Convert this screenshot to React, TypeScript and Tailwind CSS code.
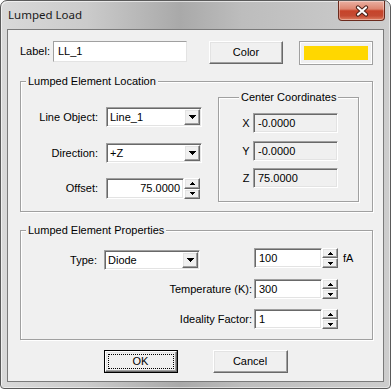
import React from "react";

const raised =
  "bg-[#f0f0f0] border border-t-white border-l-white border-r-[#696969] border-b-[#696969] shadow-[inset_-1px_-1px_0_#a0a0a0,inset_1px_1px_0_#e3e3e3]";
const sunken =
  "border border-t-[#a0a0a0] border-l-[#a0a0a0] border-r-white border-b-white shadow-[inset_1px_1px_0_#696969,inset_-1px_-1px_0_#e3e3e3] p-[1px]";

function DownArrow() {
  return (
    <svg width="7" height="4" viewBox="0 0 7 4" shapeRendering="crispEdges">
      <path d="M0 0h7v1h-1v1h-1v1h-1v1h-1v-1h-1v-1h-1v-1h-1z" fill="#000" />
    </svg>
  );
}

function SmallUp() {
  return (
    <svg width="5" height="3" viewBox="0 0 5 3" shapeRendering="crispEdges">
      <path d="M2 0h1v1h1v1h1v1h-5v-1h1v-1h1z" fill="#000" />
    </svg>
  );
}

function SmallDown() {
  return (
    <svg width="5" height="3" viewBox="0 0 5 3" shapeRendering="crispEdges">
      <path d="M0 0h5v1h-1v1h-1v1h-1v-1h-1v-1h-1z" fill="#000" />
    </svg>
  );
}

function Combo({ value, className = "" }: { value: string; className?: string }) {
  return (
    <div className={`${sunken} bg-white flex h-[20px] w-[96px] ${className}`}>
      <div className="flex-1 pl-[2px] flex items-center leading-none">{value}</div>
      <div className={`${raised} w-[16px] h-full flex items-center justify-center`}>
        <DownArrow />
      </div>
    </div>
  );
}

function SpinEdit({
  value,
  className = "",
  right = false,
}: {
  value: string;
  className?: string;
  right?: boolean;
}) {
  return (
    <div className={`flex h-[20px] ${className}`}>
      <div
        className={`${sunken} bg-white flex-1 flex items-center leading-none ${
          right ? "justify-end pr-[3px]" : "pl-[4px]"
        }`}
      >
        {value}
      </div>
      <div className="w-[16px] flex flex-col">
        <div className={`${raised} flex-1 flex items-center justify-center`}>
          <SmallUp />
        </div>
        <div className={`${raised} flex-1 flex items-center justify-center`}>
          <SmallDown />
        </div>
      </div>
    </div>
  );
}

function Group({
  title,
  className = "",
  titleClass = "left-[5px]",
  children,
}: {
  title: string;
  className?: string;
  titleClass?: string;
  children?: React.ReactNode;
}) {
  return (
    <div
      className={`relative border border-[#a0a0a0] shadow-[inset_1px_1px_0_#ffffff,1px_1px_0_#ffffff] ${className}`}
    >
      <span className={`absolute top-[-8px] ${titleClass} px-[2px] bg-[#f0f0f0] leading-[14px]`}>
        {title}
      </span>
      {children}
    </div>
  );
}

function CoordRow({ label, value, className = "" }: { label: string; value: string; className?: string }) {
  return (
    <div className={`flex items-center ${className}`}>
      <div className="ml-[20px] w-[14px] text-center">{label}</div>
      <div className={`${sunken} bg-[#f0f0f0] w-[85px] h-[20px] flex items-center pl-[4px] leading-none`}>
        {value}
      </div>
    </div>
  );
}

export default function App() {
  return (
    <div className="w-[391px] h-[389px] bg-white font-['Liberation_Sans',Arial,sans-serif] text-[11px] text-black">
      <div className="w-[391px] h-[389px] rounded-t-[7px] rounded-b-[4px] border border-[#5a5a5a] bg-[linear-gradient(90deg,#d9d9d9_0%,#cbcbcb_22%,#a9a9a9_46%,#bdbdbd_62%,#cdcdcd_100%)] flex flex-col shadow-[inset_1px_1px_0_rgba(255,255,255,0.6),inset_-1px_-1px_0_rgba(255,255,255,0.5)]">
        {/* title bar */}
        <div className="h-[28px] flex items-start">
          <span className="ml-[7px] mt-[6px] text-[11.5px] leading-[16px] font-['Noto_Sans',sans-serif] text-[#1a1a1a]">
            Lumped Load
          </span>
          <div className="ml-auto mr-[5px] w-[47px] h-[20px] rounded-b-[4px] border border-t-0 border-[#6b2a1d] bg-[linear-gradient(180deg,#eab0a2_0%,#de8570_42%,#c6432a_52%,#c44a32_78%,#de7e62_100%)] shadow-[inset_0_0_0_1px_rgba(255,255,255,0.35)] flex items-center justify-center">
            <svg width="14" height="12" viewBox="0 0 14 12">
              <path d="M3 2.5 L11 9.5 M11 2.5 L3 9.5" stroke="#4a2219" strokeWidth="4.2" strokeLinecap="round" />
              <path d="M3 2.5 L11 9.5 M11 2.5 L3 9.5" stroke="#ffffff" strokeWidth="2.2" strokeLinecap="round" />
            </svg>
          </div>
        </div>

        {/* client area */}
        <div className="mx-[6px] h-[353px] border border-[#7a7a7a] bg-[#f0f0f0] flex flex-col">
          {/* label row */}
          <div className="flex items-start mt-[11px] ml-[12px]">
            <div className="w-[33px] h-[21px] flex items-center">Label:</div>
            <div className="w-[134px] h-[21px] border border-t-[#a0a0a0] border-l-[#a0a0a0] border-r-[#e3e3e3] border-b-[#e3e3e3] bg-white flex items-center pl-[4px]">
              LL_1
            </div>
            <div className={`${raised} ml-[22px] w-[74px] h-[23px] flex items-center justify-center`}>Color</div>
            <div className="ml-[16px] w-[74px] h-[24px] border border-[#a0a0a0] shadow-[inset_1px_1px_0_#ffffff,inset_-1px_-1px_0_#ffffff] p-[4px]">
              <div className="w-full h-full bg-[#ffd700]" />
            </div>
          </div>

          {/* Lumped Element Location */}
          <Group title="Lumped Element Location" className="ml-[12px] mt-[16px] w-[353px] h-[131px] flex items-start">
            <div className="flex flex-col mt-[25px]">
              <div className="flex items-center">
                <div className="w-[77px] text-right">Line Object:</div>
                <Combo value="Line_1" className="ml-[8px]" />
              </div>
              <div className="flex items-center mt-[16px]">
                <div className="w-[77px] text-right">Direction:</div>
                <Combo value="+Z" className="ml-[8px]" />
              </div>
              <div className="flex items-center mt-[15px]">
                <div className="w-[77px] text-right">Offset:</div>
                <SpinEdit value="75.0000" right className="ml-[8px] w-[94px] h-[21px]" />
              </div>
            </div>
            <Group
              title="Center Coordinates"
              titleClass="left-[20px]"
              className="ml-[16px] mt-[15px] w-[141px] h-[105px] flex flex-col"
            >
              <CoordRow label="X" value="-0.0000" className="mt-[15px]" />
              <CoordRow label="Y" value="-0.0000" className="mt-[8px]" />
              <CoordRow label="Z" value="75.0000" className="mt-[7px]" />
            </Group>
          </Group>

          {/* Lumped Element Properties */}
          <Group title="Lumped Element Properties" className="ml-[12px] mt-[18px] w-[353px] h-[110px] flex flex-col">
            <div className="flex items-start mt-[17px] h-[22px]">
              <div className="w-[76px] mt-[2px] h-[20px] flex items-center justify-end">Type:</div>
              <Combo value="Diode" className="ml-[7px] mt-[2px]" />
              <SpinEdit value="100" className="ml-[54px] w-[84px]" />
              <div className="ml-[5px] h-[20px] flex items-center">fA</div>
            </div>
            <div className="flex items-center mt-[9px]">
              <div className="w-[231px] text-right">Temperature (K):</div>
              <SpinEdit value="300" className="ml-[2px] w-[84px]" />
            </div>
            <div className="flex items-center mt-[10px]">
              <div className="w-[231px] text-right">Ideality Factor:</div>
              <SpinEdit value="1" className="ml-[2px] w-[84px]" />
            </div>
          </Group>

          {/* buttons */}
          <div className="flex justify-center gap-[35px] mt-[10px]">
            <div className="w-[74px] h-[23px] border border-black">
              <div className={`${raised} w-full h-full p-[2px]`}>
                <div className="w-full h-full border border-dotted border-black flex items-center justify-center">
                  OK
                </div>
              </div>
            </div>
            <div className={`${raised} w-[75px] h-[23px] flex items-center justify-center`}>Cancel</div>
          </div>
        </div>
      </div>
    </div>
  );
}
